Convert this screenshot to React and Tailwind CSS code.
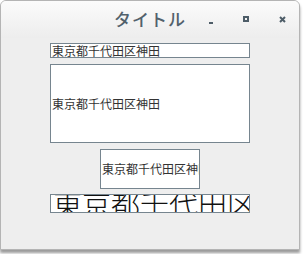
import React from 'react';

const cjk = { fontFamily: '"Noto Sans CJK JP", "Noto Sans", sans-serif' };

const App = () => {
    return (
        <div className="w-[304px] h-[254px] bg-white" style={cjk}>
            {/* Window frame */}
            <div className="w-[300px] h-[250px] flex flex-col border border-[#b4b4b4] rounded-t-[6px] bg-[#eeeeee] overflow-hidden shadow-[0_3px_3px_rgba(0,0,0,0.4)]">
                {/* Title bar */}
                <div className="h-[37px] shrink-0 relative flex items-center justify-center bg-gradient-to-b from-[#fbfbfb] to-[#ededed]">
                    <span className="text-[17px] font-medium text-[#52616c] tracking-[1px] -mt-[2px]">タイトル</span>
                    <div className="absolute left-[208px] top-[21px] w-[4px] h-[2px] bg-[#4e5d68]" />
                    <div className="absolute left-[242px] top-[15px] w-[6px] h-[6px] border-2 border-[#4e5d68]" />
                    <svg className="absolute left-[278px] top-[15px]" width="7" height="7" viewBox="0 0 7 7">
                        <path d="M1 1L6 6M6 1L1 6" stroke="#4e5d68" strokeWidth="2" />
                    </svg>
                </div>

                {/* Content */}
                <div className="flex flex-col items-center pt-[5px] text-[#333333]">
                    <div className="w-[200px] h-[15px] bg-white border border-[#76858f] flex items-center px-[1px] overflow-hidden text-[12px] leading-none whitespace-nowrap">
                        東京都千代田区神田
                    </div>
                    <div className="mt-[6px] w-[200px] h-[79px] bg-white border border-[#76858f] flex items-center px-[1px] text-[12px] leading-none whitespace-nowrap">
                        東京都千代田区神田
                    </div>
                    <div className="mt-[6px] w-[100px] h-[40px] bg-white border border-[#76858f] flex items-center px-[1px] overflow-hidden text-[12px] leading-none whitespace-nowrap">
                        東京都千代田区神田
                    </div>
                    <div className="mt-[5px] w-[200px] h-[19px] bg-white border border-[#76858f] flex items-center px-[2px] overflow-hidden text-[29px] leading-none whitespace-nowrap text-[#111111] font-light tracking-[0px]">
                        東京都千代田区神田
                    </div>
                </div>
            </div>
        </div>
    );
};

export default App;
